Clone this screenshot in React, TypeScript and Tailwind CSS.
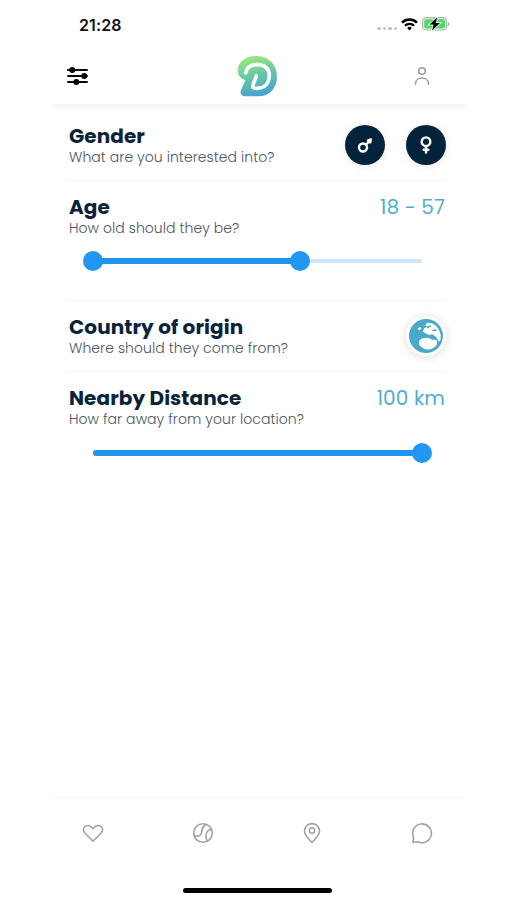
import React from 'react';

type SettingRowProps = {
    title: string;
    subtitle: string;
    children?: React.ReactNode;
};

const StatusBar = () => (
    <div className="h-[50px] flex items-center justify-between pl-[27px] pr-[15px]">
        <span className="font-['Inter',sans-serif] text-[16px] font-semibold leading-none tracking-[0.1px] text-[#111]">21:28</span>
        <div className="flex items-center mt-[-2px]">
            <div className="flex gap-[2px] mr-[4px] mt-[9px]">
                {[0, 1, 2, 3].map((dot) => (
                    <span key={dot} className="size-[3.4px] rounded-full bg-[#c2c2c4]" />
                ))}
            </div>
            <svg width="17" height="13" viewBox="0 0 17 13" className="mr-[4px]">
                <path d="M1 4.6a10.6 10.6 0 0 1 15 0" fill="none" stroke="#000" strokeWidth="2.5" />
                <path d="M3.9 7.8a6.5 6.5 0 0 1 9.2 0" fill="none" stroke="#000" strokeWidth="2.2" />
                <path d="M8.5 12.5 6.1 10a3.4 3.4 0 0 1 4.8 0z" />
            </svg>
            <svg width="28" height="14" viewBox="0 0 28 14">
                <rect x="0.6" y="0.6" width="24" height="12.4" rx="3.6" fill="#e4f6e6" stroke="#a9b5aa" strokeWidth="1.1" />
                <rect x="2.2" y="2.2" width="20.8" height="9.2" rx="1.8" fill="#52d66c" />
                <path d="M25.8 5v4c1.1-.3 1.7-1 1.7-2s-.6-1.7-1.7-2z" fill="#a9afaa" />
                <path d="M15.2.3 7.5 7.6h4l-1.4 5.900 7.900-7.400h-4.300z" stroke="#d8f7dd" strokeWidth="2" paintOrder="stroke" />
            </svg>
        </div>
    </div>
);

const Logo = () => (
    <svg width="41" height="42" viewBox="37 29 123 126">
        <defs>
            <linearGradient id="logo" x1="0.35" y1="0" x2="0.6" y2="1">
                <stop offset="0.05" stopColor="#96e580" />
                <stop offset="0.5" stopColor="#65c6a7" />
                <stop offset="1" stopColor="#459fd4" />
            </linearGradient>
        </defs>
        <path
            d="M98 32C66 30 40 47 39 75c0 14 9 25 23 30l-13 29c-4 11 1 19 13 19h38c34 0 57-24 57-59 0-36-24-60-59-62z"
            fill="url(#logo)"
        />
        <path
            d="M63 83c3-18 16-25 35-25 23 0 37 14 36 34-1 23-15 37-37 37-13 0-15-3-11-13l9-24"
            fill="none"
            stroke="#fff"
            strokeWidth="11"
            strokeLinecap="round"
            strokeLinejoin="round"
        />
    </svg>
);

const Header = () => (
    <header className="h-[54px] flex items-center justify-between pl-[15px] pr-[34px] pb-[2px]">
        <svg width="21" height="20" viewBox="0 0 21 20" stroke="#080808" strokeWidth="2" strokeLinecap="round">
            <path d="M1 4h19M1 10h19M1 16h19" />
            <circle cx="5.2" cy="4" r="2" fill="#080808" />
            <circle cx="17.2" cy="10" r="2" fill="#080808" />
            <circle cx="9.3" cy="16" r="2" fill="#080808" />
        </svg>
        <div className="ml-[13px]">
            <Logo />
        </div>
        <svg width="18" height="20" viewBox="0 0 18 20" fill="none" stroke="#9b9b9e" strokeWidth="1.6" strokeLinecap="round">
            <circle cx="9" cy="5" r="3.3" />
            <path d="M2.4 18.2c0-8.200 13.200-8.200 13.200 0" />
        </svg>
    </header>
);

const SettingRow = ({ title, subtitle, children }: SettingRowProps) => (
    <div className="flex justify-between">
        <div className="whitespace-nowrap">
            <h2 className="text-[20px] leading-[24px] font-bold tracking-[0.08px] text-[#08233a]">{title}</h2>
            <p className="text-[14px] leading-[18px] font-light tracking-[0.06px] text-[#4c5560]">{subtitle}</p>
        </div>
        {children}
    </div>
);

const GenderButton = ({ children }: { children: React.ReactNode }) => (
    <button className="size-[40px] rounded-full bg-[#04223a] flex items-center justify-center shadow-[0_1px_10px_rgba(0,0,0,0.09)]">
        <svg width="20" height="20" viewBox="0 0 20 20" fill="none" stroke="#fff" strokeWidth="2.4" strokeLinecap="round" strokeLinejoin="round">
            {children}
        </svg>
    </button>
);

const Globe = () => (
    <svg width="36" height="36" viewBox="0 0 36 36">
        <circle cx="18" cy="18" r="17" fill="#48a9cb" />
        <g fill="#fff">
            <path d="M14.500 13.500l2-3.500 3-1.500-2.500-1.200 2.500-2.500 4.500.4 4 2.600 3 4 1.700 5-.2 5.500-1.500 1.200-3-4.500-3.500-2.800-3.500.8-3.500-1.800z" />
            <path d="M11 24.500c.3-3 2.800-4.700 6-4.500 2.500-1 5 .2 6.800 1.500l5 .7c1.300 3-.5 6.300-4 8-3.300 1.800-8 1.600-11-1-1.800-1.300-3-2.500-2.800-4.700z" />
            <path d="M9.500 11l2.500-2 1.500 1.200-2 2z" />
        </g>
        <path d="M19.500 9.500l3-1.500M25 12.500l3-.5" stroke="#48a9cb" strokeWidth="1.5" strokeLinecap="round" />
    </svg>
);

// min and max are percentages of the track
const Slider = ({ min, max, showMin }: { min: number; max: number; showMin?: boolean }) => (
    <div className="relative ml-[24px] mr-[23px] h-[6px] py-[1px]">
        <div className="h-[4px] rounded-full bg-[#cfe6f9]" />
        <div className="absolute inset-y-0 rounded-full bg-[#2292ea]" style={{ left: `${min}%`, width: `${max - min}%` }} />
        {showMin && (
            <div className="absolute -top-[7px] size-[20px] -translate-x-1/2 rounded-full bg-[#2196f3]" style={{ left: `${min}%` }} />
        )}
        <div className="absolute -top-[7px] size-[20px] -translate-x-1/2 rounded-full bg-[#2196f3]" style={{ left: `${max}%` }} />
    </div>
);

const TabBar = () => (
    <nav className="h-[72px] border-t border-[#f6f6f6] flex items-center justify-between pl-[30px] pr-[32px] pb-[2px]">
        <svg width="22" height="22" viewBox="0 0 22 22" fill="none" stroke="#a0a4a7" strokeWidth="1.6" strokeLinecap="round" strokeLinejoin="round">
            <path d="M11 19.200 2.800 11C.4 8.500 1.200 5 4 3.900c2.700-1 5 .3 7 2.600 2-2.300 4.300-3.600 7-2.600 2.800 1.100 3.600 4.600 1.200 7.100z" />
        </svg>
        <svg width="22" height="22" viewBox="0 0 22 22" fill="none" stroke="#a0a4a7" strokeWidth="1.6" strokeLinecap="round">
            <circle cx="11" cy="11" r="9.3" />
            <path d="M2.200 13.700c4 1 7 .3 7.300-3 .4-3.700.8-6.300 4.500-8.200" />
            <path d="M19.600 7.600c-3.300-.3-5.600 2.400-5.600 6.300 0 2 .4 3.700 1.300 5.200" />
        </svg>
        <svg width="22" height="22" viewBox="0 0 22 22" fill="none" stroke="#a0a4a7" strokeWidth="1.6" strokeLinejoin="round">
            <path d="M11 20.300C6.300 16.100 3.500 12.600 3.500 9.100a7.500 7.500 0 0 1 15 0c0 3.500-2.800 7-7.500 11.200z" />
            <circle cx="11" cy="8.500" r="2.700" />
        </svg>
        <svg width="22" height="22" viewBox="0 0 22 22" fill="none" stroke="#a0a4a7" strokeWidth="1.6" strokeLinecap="round" strokeLinejoin="round">
            <path d="M1.900 20.200l.7-4.800a9.400 9.400 0 1 1 4.300 4.300z" />
        </svg>
    </nav>
);

const App = () => (
    <div className="h-[900px] w-[507px] overflow-hidden bg-white font-['Poppins','Inter',sans-serif]">
        <div className="ml-[52px] w-[413px] h-full flex flex-col">
            <StatusBar />
            <Header />

            <main className="flex-1 pl-[17px] pr-[20px] relative">
                {/* Soft shade under the header */}
                <div className="absolute inset-x-0 top-0 h-[8px] bg-gradient-to-b from-[#f5f5f5] to-white" />

                <section className="h-[77px] pt-[20px] border-b border-[#f4f4f4]">
                    <SettingRow title="Gender" subtitle="What are you interested into?">
                        <div className="flex gap-[21px] mr-[-1px] mt-[1px]">
                            <GenderButton>
                                <circle cx="8" cy="12.5" r="4" />
                                <path d="M11.200 9.300l4.300-4.300M13 5.300l2.800-.9-.6 3z" />
                            </GenderButton>
                            <GenderButton>
                                <circle cx="10" cy="6.700" r="4.300" />
                                <path d="M10 11.500v6M7.700 14.700h4.600" />
                            </GenderButton>
                        </div>
                    </SettingRow>
                </section>

                <section className="h-[120px] pt-[14px] border-b border-[#f4f4f4]">
                    <SettingRow title="Age" subtitle="How old should they be?">
                        <span className="text-[20px] leading-[24px] tracking-[0.1px] text-[#50aed0]">18 - 57</span>
                    </SettingRow>
                    <div className="mt-[21px]">
                        <Slider min={0} max={62.9} showMin />
                    </div>
                </section>

                <section className="h-[71px] pt-[14px] border-b border-[#f4f4f4]">
                    <SettingRow title="Country of origin" subtitle="Where should they come from?">
                        <button className="size-[40px] mr-[-1px] mt-[1px] rounded-full bg-white flex items-center justify-center shadow-[0_1px_10px_rgba(0,0,0,0.14)]">
                            <Globe />
                        </button>
                    </SettingRow>
                </section>

                <section className="pt-[14px]">
                    <SettingRow title="Nearby Distance" subtitle="How far away from your location?">
                        <span className="text-[20px] leading-[24px] tracking-[0.1px] text-[#50aed0]">100 km</span>
                    </SettingRow>
                    <div className="mt-[22px]">
                        <Slider min={0} max={100} />
                    </div>
                </section>
            </main>

            <TabBar />
            <div className="h-[31px] flex justify-center pt-[19px]">
                <div className="w-[149px] h-[5px] rounded-full bg-black ml-[-2px]" />
            </div>
        </div>
    </div>
);

export default App;
